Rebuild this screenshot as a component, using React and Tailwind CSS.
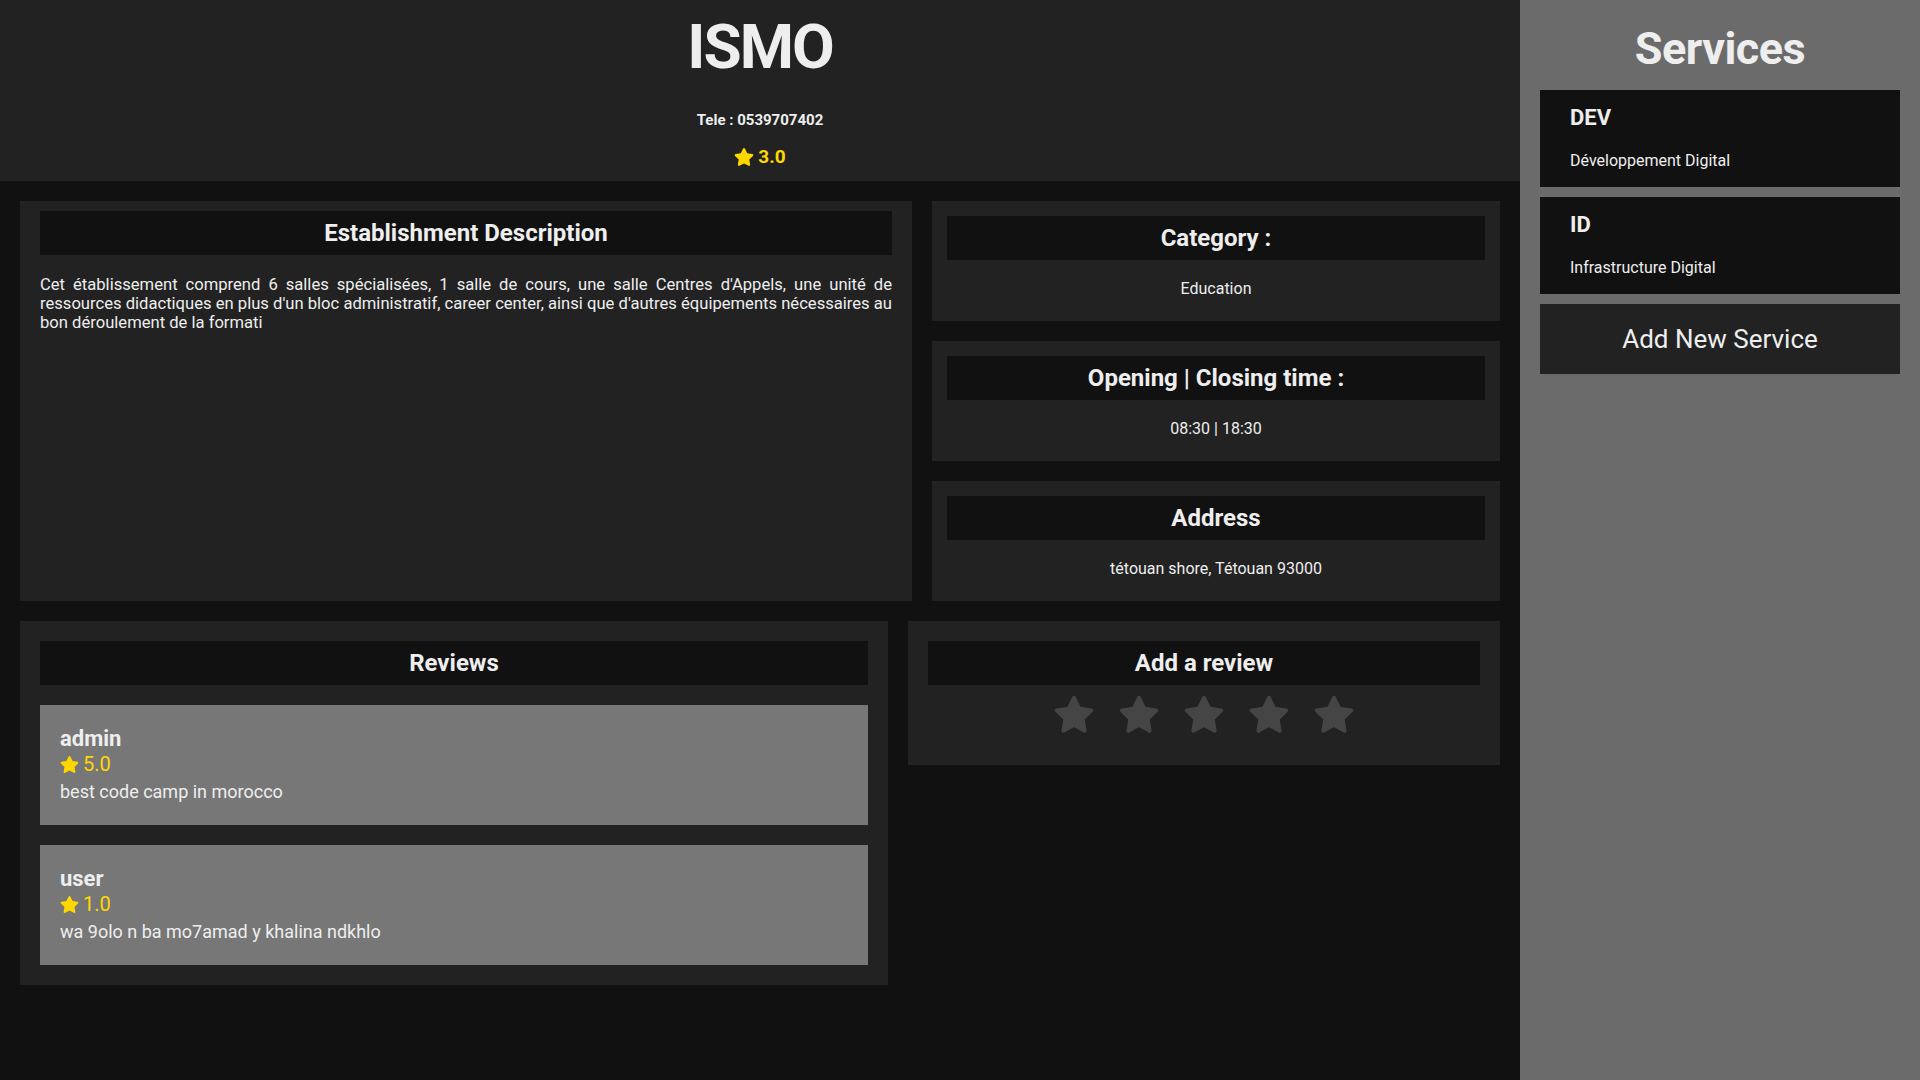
import { FaStar } from "react-icons/fa"

const reviews = [
  { user: "admin", rating: "5.0", comment: "best code camp in morocco" },
  { user: "user", rating: "1.0", comment: "wa 9olo n ba mo7amad y khalina ndkhlo" },
]

const services = [
  { code: "DEV", name: "Développement Digital" },
  { code: "ID", name: "Infrastructure Digital" },
]

const infos = [
  { title: "Category :", value: "Education" },
  { title: "Opening | Closing time :", value: "08:30 | 18:30" },
  { title: "Address", value: "tétouan shore, Tétouan 93000" },
]

function BlockTitle({ children }) {
  return (
    <div className="flex h-[44px] items-center justify-center bg-[#111] text-[24px] font-bold text-[#eee]">
      {children}
    </div>
  )
}

function RoundStar() {
  return (
    <svg width="44" height="42" viewBox="0 0 24 24" className="cursor-pointer">
      <polygon
        points="12,2.2 15.05,8.4 21.9,9.4 16.95,14.2 18.1,21 12,17.8 5.9,21 7.05,14.2 2.1,9.4 8.95,8.4"
        fill="#454545"
        stroke="#454545"
        strokeWidth="2.2"
        strokeLinejoin="round"
      />
    </svg>
  )
}

export default function App() {
  return (
    <div className="flex min-h-screen w-full font-['Roboto','Liberation_Sans',sans-serif] text-[#eee]">
      <main className="w-[1520px] bg-[#111]">
        <header className="flex h-[181px] flex-col items-center bg-[#222]">
          <h1 className="mt-[9px] text-[62px] font-bold leading-[76px] tracking-[-2px]">ISMO</h1>
          <p className="mt-[26px] text-[15px] font-bold leading-[18px]">Tele : 0539707402</p>
          <div className="mt-[17px] flex items-center gap-[4px] text-[19px] font-bold leading-[22px] text-[#ffd700]">
            <FaStar className="h-[20px] w-[20px]" />
            <span>3.0</span>
          </div>
        </header>

        <div className="flex flex-col gap-[20px] px-[20px] py-[20px]">
          <div className="flex gap-[20px]">
            <section className="h-[400px] w-[892px] bg-[#222] px-[20px] pt-[10px]">
              <BlockTitle>Establishment Description</BlockTitle>
              <p className="mt-[20px] text-justify text-[16.6px] leading-[19px]">
                Cet établissement comprend 6 salles spécialisées, 1 salle de cours, une salle Centres d'Appels, une
                unité de ressources didactiques en plus d'un bloc administratif, career center, ainsi que d'autres
                équipements nécessaires au bon déroulement de la formati
              </p>
            </section>

            <div className="flex w-[568px] flex-col gap-[20px]">
              {infos.map((info) => (
                <section key={info.title} className="h-[120px] bg-[#222] p-[15px]">
                  <BlockTitle>{info.title}</BlockTitle>
                  <p className="mt-[19px] text-center text-[16px] leading-[19px]">{info.value}</p>
                </section>
              ))}
            </div>
          </div>

          <div className="flex items-start gap-[20px]">
            <section className="flex w-[868px] flex-col gap-[20px] bg-[#222] p-[20px]">
              <BlockTitle>Reviews</BlockTitle>
              {reviews.map((r) => (
                <div key={r.user} className="h-[120px] bg-[#777] px-[20px] pt-[21px]">
                  <h3 className="text-[22px] font-bold leading-[26px]">{r.user}</h3>
                  <div className="flex items-center gap-[4px] text-[20px] leading-[24px] text-[#ffd700]">
                    <FaStar className="h-[19px] w-[19px]" />
                    <span>{r.rating}</span>
                  </div>
                  <p className="mt-[5px] text-[18px] leading-[22px]">{r.comment}</p>
                </div>
              ))}
            </section>

            <section className="h-[144px] w-[592px] bg-[#222] px-[20px] pt-[20px]">
              <BlockTitle>Add a review</BlockTitle>
              <div className="mt-[9px] flex justify-center gap-[21px]">
                {[1, 2, 3, 4, 5].map((n) => (
                  <RoundStar key={n} />
                ))}
              </div>
            </section>
          </div>
        </div>
      </main>

      <aside className="flex flex-1 flex-col bg-[#6b6b6b] px-[20px] pt-[20px]">
        <h2 className="text-center text-[45px] font-bold leading-[58px] tracking-[-0.5px]">Services</h2>
        <div className="mt-[12px] flex flex-col gap-[10px]">
          {services.map((s) => (
            <div key={s.code} className="h-[97px] bg-[#111] px-[30px] pt-[15px]">
              <h3 className="text-[22px] font-bold leading-[26px]">{s.code}</h3>
              <p className="mt-[20px] text-[16px] leading-[19px]">{s.name}</p>
            </div>
          ))}
          <button className="h-[70px] bg-[#222] text-[26px] text-[#eee]">Add New Service</button>
        </div>
      </aside>
    </div>
  )
}
